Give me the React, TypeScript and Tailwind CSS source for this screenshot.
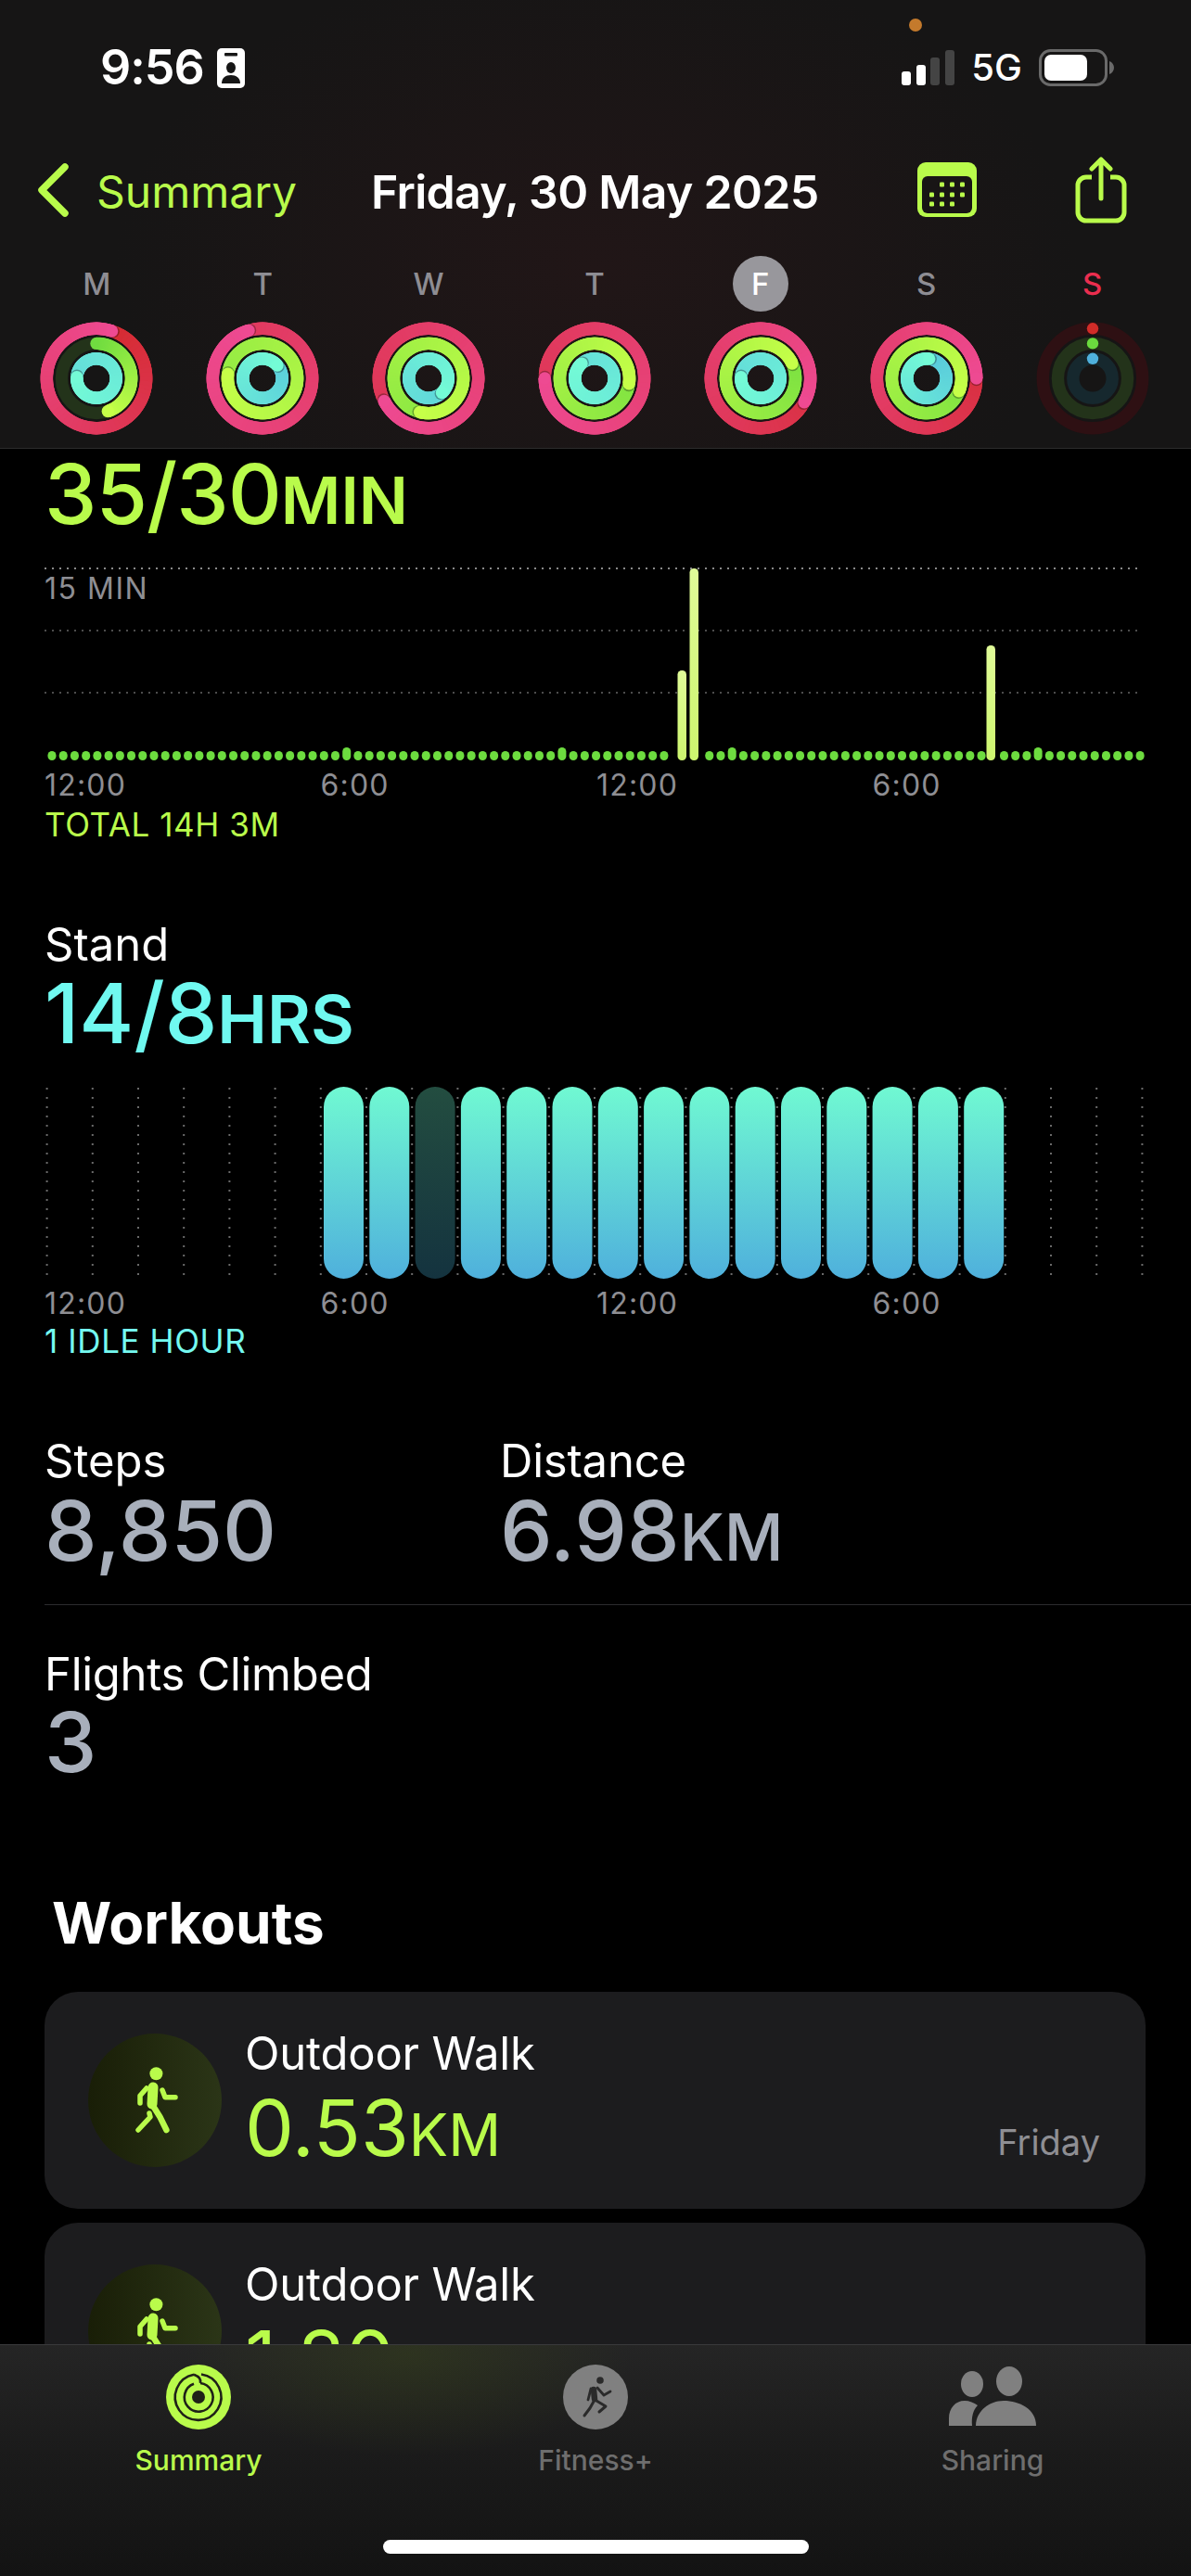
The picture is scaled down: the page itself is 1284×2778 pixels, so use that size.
const LIME = "#b9fb4b";

type RingDay = { label: string; move: number; exercise: number; stand: number };

const days: RingDay[] = [
  { label: "M", move: 1.05, exercise: 0.447, stand: 1.76 },
  { label: "T", move: 1.955, exercise: 1.77, stand: 1.136 },
  { label: "W", move: 1.675, exercise: 1.54, stand: 1.38 },
  { label: "T", move: 1.75, exercise: 1.275, stand: 1.885 },
  { label: "F", move: 1.33, exercise: 1.18, stand: 1.76 },
  { label: "S", move: 1.25, exercise: 1.31, stand: 1.02 },
  { label: "S", move: 0, exercise: 0, stand: 0 },
];

function mix(a: string, b: string, t: number) {
  const ch = (hex: string, i: number) => parseInt(hex.slice(1 + i * 2, 3 + i * 2), 16);
  const parts = [0, 1, 2].map((i) => Math.round(ch(a, i) + (ch(b, i) - ch(a, i)) * t));
  return `rgb(${parts.join(",")})`;
}

function polar(c: number, r: number, laps: number) {
  const a = laps * 2 * Math.PI;
  return { x: c + r * Math.sin(a), y: c - r * Math.cos(a) };
}

function RingArc({ r, total, from, to, track, dot }: { r: number; total: number; from: string; to: string; track: string; dot: string }) {
  const c = 61;
  const sw = 13.4;
  if (total === 0) {
    const top = polar(c, r, 0);
    return (
      <g>
        <circle cx={c} cy={c} r={r} fill="none" stroke={track} strokeWidth={sw} />
        <circle cx={top.x} cy={top.y} r={6.2} fill={dot} />
      </g>
    );
  }
  const start = Math.max(0, total - 1);
  const steps = 72;
  const span = total - start;
  const segments = [];
  for (let i = 0; i < steps; i++) {
    const p0 = start + (span * i) / steps;
    const p1 = start + (span * (i + 3)) / steps;
    const a = polar(c, r, p0);
    const b = polar(c, r, Math.min(p1, total));
    segments.push(
      <path
        key={i}
        d={`M${a.x} ${a.y}A${r} ${r} 0 0 1 ${b.x} ${b.y}`}
        fill="none"
        stroke={mix(from, to, p0 / total)}
        strokeWidth={sw}
      />
    );
  }
  const head = polar(c, r, total);
  const shade = polar(c, r, total + 1.6 / (2 * Math.PI * r));
  const tail = polar(c, r, 0);
  return (
    <g>
      {total < 1 && <circle cx={c} cy={c} r={r} fill="none" stroke={track} strokeWidth={sw} />}
      {total < 1 && <circle cx={tail.x} cy={tail.y} r={sw / 2} fill={from} />}
      {segments}
      {total >= 1 && <circle cx={shade.x} cy={shade.y} r={sw / 2} fill="#000" opacity={0.3} />}
      <circle cx={head.x} cy={head.y} r={sw / 2} fill={to} />
    </g>
  );
}

function Rings({ day }: { day: RingDay }) {
  return (
    <svg width="122" height="122" viewBox="0 0 122 122">
      <RingArc r={53.7} total={day.move} from="#d42a2e" to="#ee4a92" track="#2e1013" dot="#d12c28" />
      <RingArc r={37.6} total={day.exercise} from="#70dc40" to="#c6ff48" track="#23331a" dot="#6ada3e" />
      <RingArc r={21.2} total={day.stand} from="#58c8dc" to="#74fbd6" track="#16282e" dot="#4fb0dc" />
    </svg>
  );
}

function StatusBar() {
  return (
    <div className="relative flex h-[48px] translate-y-[1px] items-center justify-between pl-[108px] pr-[82px]">
      <div className="flex items-center gap-[14px]">
        <span className="text-[52px] leading-[48px] font-semibold text-white tracking-[-1px]">9:56</span>
        <svg width="30" height="43" viewBox="0 0 30 43">
          <rect width="30" height="43" rx="5" fill="#fff" />
          <rect x="8" y="5" width="14" height="3.5" rx="1" fill="#161616" />
          <ellipse cx="15" cy="21" rx="5" ry="6" fill="#161616" />
          <path d="M5 38c0-6 4-9 10-9s10 3 10 9z" fill="#161616" />
        </svg>
      </div>
      <span className="absolute left-[980px] top-[-29px] h-[14px] w-[14px] rounded-full bg-[#c47a2c]" />
      <div className="flex items-center">
        <svg width="58" height="38" viewBox="0 0 58 38">
          <rect x="0" y="23" width="10" height="15" rx="3" fill="#fff" />
          <rect x="16" y="16" width="10" height="22" rx="3" fill="#fff" />
          <rect x="31" y="8" width="10" height="30" rx="3" fill="#444" />
          <rect x="47" y="0" width="10" height="38" rx="3" fill="#444" />
        </svg>
        <span className="ml-[17px] text-[40px] leading-[48px] font-medium text-white">5G</span>
        <svg className="ml-[18px]" width="82" height="40" viewBox="0 0 82 40">
          <rect x="1.5" y="1.5" width="71" height="37" rx="11" fill="none" stroke="#6a6a6a" strokeWidth="3" />
          <rect x="6" y="6" width="46" height="28" rx="7" fill="#fff" />
          <path d="M76 13c3 1 5 4 5 7s-2 6-5 7z" fill="#6a6a6a" />
        </svg>
      </div>
    </div>
  );
}

function NavRow() {
  return (
    <div className="mt-[69px] flex h-[80px] items-center pl-[41px]">
      <svg width="34" height="58" viewBox="0 0 34 58">
        <path d="M29 4L4 29l25 25" fill="none" stroke={LIME} strokeWidth="7.5" strokeLinecap="round" strokeLinejoin="round" />
      </svg>
      <span className="ml-[29px] w-[297px] translate-y-[2px] text-[48px] leading-[80px] text-[#b9fb4b]">Summary</span>
      <span className="ml-[-1px] w-[589px] translate-y-[2px] text-[50px] leading-[80px] font-semibold text-white tracking-[-0.7px]">Friday, 30 May 2025</span>
      <svg width="64" height="60" viewBox="0 0 64 60">
        <rect width="64" height="59" rx="9" fill={LIME} />
        <rect x="5" y="15" width="54" height="40" rx="6" fill="#181515" />
        {[
          [16, 24], [27, 24], [38, 24],
          [5, 35], [16, 35], [27, 35], [38, 35],
          [5, 45], [16, 45], [27, 45],
        ].map(([x, y], i) => (
          <rect key={i} x={x + 8} y={y - 2.5} width="5" height="5" rx="1.2" fill={LIME} />
        ))}
      </svg>
      <svg className="ml-[106px]" width="56" height="72" viewBox="0 0 56 72">
        <path d="M18 22H12a9 9 0 0 0-9 9v29a9 9 0 0 0 9 9h32a9 9 0 0 0 9-9V31a9 9 0 0 0-9-9h-6" fill="none" stroke={LIME} strokeWidth="5" />
        <path d="M28 3v42M18 13L28 3l10 10" fill="none" stroke={LIME} strokeWidth="5" strokeLinecap="round" strokeLinejoin="round" />
      </svg>
    </div>
  );
}

function WeekRow() {
  return (
    <div className="mt-[31px] grid w-[1252px] ml-[15px] grid-cols-7">
      {days.map((d, i) => (
        <div key={i} className="flex flex-col items-center">
          <div
            className={
              i === 4
                ? "flex h-[60px] w-[60px] items-center justify-center rounded-full bg-[#98979c] text-[33px] leading-[60px] font-medium text-white"
                : i === 6
                  ? "flex h-[60px] w-[60px] items-center justify-center text-[33px] leading-[60px] font-medium text-[#ea2e4f]"
                  : "flex h-[60px] w-[60px] items-center justify-center text-[33px] leading-[60px] font-medium text-[#8e8d93]"
            }
          >
            {d.label}
          </div>
          <div className="mt-[11px] flex">
            <Rings day={d} />
          </div>
        </div>
      ))}
    </div>
  );
}

function ExerciseChart() {
  // 15 minute buckets, the tall ones sit a little off the dot grid
  const dots = Array.from({ length: 97 }, (_, i) => 8 + i * 12.22);
  const tall = [
    { x: 687, top: 115 },
    { x: 700, top: 5 },
    { x: 1020, top: 88 },
  ];
  const bumps = [26, 45, 60, 87];
  return (
    <div className="relative mt-[26px] h-[216px] w-[1190px]">
      <svg width="1190" height="216" viewBox="0 0 1190 216">
        <defs>
          <linearGradient id="tallBar" x1="0" y1="0" x2="0" y2="1">
            <stop offset="0" stopColor="#e0fb98" />
            <stop offset="1" stopColor="#cdf56e" />
          </linearGradient>
        </defs>
        <line x1="0" x2="1184" y1="5" y2="5" stroke="#8a8a8a" strokeWidth="2" strokeDasharray="2 6" />
        <line x1="0" x2="1184" y1="72" y2="72" stroke="#4d4d4d" strokeWidth="2" strokeDasharray="2 6" />
        <line x1="0" x2="1184" y1="139" y2="139" stroke="#4d4d4d" strokeWidth="2" strokeDasharray="2 6" />
        {dots.map((x, i) => {
          if (tall.some((t) => Math.abs(t.x - x) < 8)) return null;
          const h = bumps.includes(i) ? 14 : 10;
          return <rect key={i} x={x - 4.5} y={212 - h} width="9" height={h} rx="4.5" fill="#6ddc3f" />;
        })}
        {tall.map((t) => (
          <rect key={t.x} x={t.x - 4.5} y={t.top} width="9.5" height={212 - t.top} rx="4.5" fill="url(#tallBar)" />
        ))}
      </svg>
      <span className="absolute left-0 top-[7px] text-[32px] leading-[40px] tracking-[1.5px] text-[#8e8e93]">15 MIN</span>
    </div>
  );
}

function StandChart() {
  const lines = Array.from({ length: 25 }, (_, i) => 2.6 + i * 49.2);
  const hours = Array.from({ length: 15 }, (_, i) => 301 + i * 49.3);
  return (
    <svg className="mt-[35px]" width="1190" height="207" viewBox="0 0 1190 207">
      <defs>
        <linearGradient id="standOn" x1="0" y1="0" x2="0" y2="1">
          <stop offset="0" stopColor="#70f9d2" />
          <stop offset="1" stopColor="#4fb0dc" />
        </linearGradient>
        <linearGradient id="standOff" x1="0" y1="0" x2="0" y2="1">
          <stop offset="0" stopColor="#234d40" />
          <stop offset="1" stopColor="#14333f" />
        </linearGradient>
      </defs>
      {lines.map((x, i) => (
        <line key={i} x1={x} x2={x} y1="1" y2="204" stroke="#6a6a6a" strokeWidth="2" strokeDasharray="2 8" />
      ))}
      {hours.map((x, i) => (
        <rect key={i} x={x} y="0" width="43" height="207" rx="21.5" fill={i === 2 ? "url(#standOff)" : "url(#standOn)"} />
      ))}
    </svg>
  );
}

function AxisLabels({ className }: { className: string }) {
  return (
    <div className={`grid w-[1190px] grid-cols-4 text-[32px] leading-[40px] tracking-[1.2px] text-[#8e8e93] ${className}`}>
      <span>12:00</span>
      <span>6:00</span>
      <span>12:00</span>
      <span>6:00</span>
    </div>
  );
}

function WalkIcon() {
  return (
    <svg width="144" height="144" viewBox="0 0 144 144" className="rounded-full bg-[linear-gradient(90deg,#191e07,#2b3517)]">
      <g fill="none" stroke={LIME} strokeLinecap="round" strokeLinejoin="round">
        <circle cx="73.4" cy="43.3" r="7" fill={LIME} stroke="none" />
        <path d="M70 58L69 76" strokeWidth="11" />
        <path d="M63 59L56 67V75" strokeWidth="5.5" />
        <path d="M80 61L83 68.7H94" strokeWidth="5.5" />
        <path d="M70 78L77.5 90L84.4 104" strokeWidth="6.5" />
        <path d="M66 86L67 90L54 104" strokeWidth="5.5" />
      </g>
    </svg>
  );
}

function WorkoutCard({ value, className }: { value: string; className?: string }) {
  return (
    <div className={`flex h-[234px] w-[1187px] items-center rounded-[36px] bg-[#1c1c1e] pl-[47px] pr-[49px] ${className ?? ""}`}>
      <WalkIcon />
      <div className="ml-[25px] self-start pt-[39px]">
        <div className="text-[49px] leading-[56px] tracking-[-0.2px] text-white">Outdoor Walk</div>
        <div className="text-[84px] leading-[104px] font-normal text-[#b9fb4b]">
          {value}
          <span className="text-[63px] leading-none">KM</span>
        </div>
      </div>
      <span className="mb-[48px] ml-auto self-end text-[38px] leading-[48px] text-[#8e8e93]">Friday</span>
    </div>
  );
}

function TabBar() {
  return (
    <div className="h-[250px] shrink-0 border-t border-[#3a3a3c] bg-[radial-gradient(ellipse_240px_110px_at_440px_10px,rgba(70,90,20,0.28),transparent),linear-gradient(180deg,#252525_0%,#1b1b1b_45%,#131313_100%)] pt-[21px]">
      <div className="grid grid-cols-3">
        <div className="flex flex-col items-center">
          <svg width="70" height="70" viewBox="0 0 70 70">
            <circle cx="35" cy="35" r="35" fill={LIME} />
            <path d="M38 10.5A24.8 24.8 0 1 1 30 10.7" fill="none" stroke="#1f2118" strokeWidth="2.6" />
            <path d="M37 20A15.4 15.4 0 1 1 30 20.8" fill="none" stroke="#1f2118" strokeWidth="2.6" />
            <path d="M30 10.7C36 13 38 16 37 20" fill="none" stroke="#1f2118" strokeWidth="2.6" />
            <circle cx="35" cy="35" r="7" fill="#1f2118" />
          </svg>
          <span className="mt-[15px] text-[30px] leading-[36px] font-medium text-[#b9fb4b]">Summary</span>
        </div>
        <div className="flex flex-col items-center">
          <svg width="70" height="70" viewBox="0 0 70 70">
            <circle cx="35" cy="35" r="35" fill="#808080" />
            <g fill="none" stroke="#2a2a2a" strokeLinecap="round" strokeLinejoin="round">
              <circle cx="40" cy="17" r="3.8" fill="#2a2a2a" stroke="none" />
              <path d="M33 27L34 37" strokeWidth="6.5" />
              <path d="M30 26L27 38" strokeWidth="2.8" />
              <path d="M37 25L44 33L51 29" strokeWidth="2.8" />
              <path d="M34 38L29 47L23 55" strokeWidth="3" />
              <path d="M36 39L46 45L39 51" strokeWidth="3" />
            </g>
          </svg>
          <span className="mt-[15px] text-[30px] leading-[36px] font-medium text-[#6e6e6e]">Fitness+</span>
        </div>
        <div className="flex flex-col items-center">
          <svg width="96" height="70" viewBox="0 0 96 70">
            <ellipse cx="26" cy="21" rx="12" ry="14" fill="#808080" />
            <ellipse cx="66" cy="18" rx="14" ry="16" fill="#808080" />
            <path d="M1 66V58C1 47 8 39 18 39C23 39 28 41 32 44C27 49 25 57 26 66z" fill="#808080" />
            <path d="M30 66C30 50 45 39 60 39C77 39 95 48 95 66z" fill="#808080" />
          </svg>
          <span className="mt-[15px] text-[30px] leading-[36px] font-medium text-[#6e6e6e]">Sharing</span>
        </div>
      </div>
      <div className="mx-auto mt-[68px] h-[15px] w-[459px] rounded-full bg-white" />
    </div>
  );
}

export default function App() {
  return (
    <div className="flex h-[2778px] w-[1284px] flex-col overflow-hidden bg-black font-['Inter',sans-serif]">
      <header className="h-[484px] shrink-0 border-b border-[#2c2c2c] bg-[radial-gradient(ellipse_520px_340px_at_50%_60%,#211617_0%,#161515_100%)] pt-[48px]">
        <StatusBar />
        <NavRow />
        <WeekRow />
      </header>

      <main className="min-h-0 flex-1 overflow-hidden pl-[48px]">
        <div className="text-[90px] leading-[98px] font-medium tracking-[-1px] text-[#b9fb4b]">
          35/30<span className="text-[70px] leading-none font-semibold tracking-normal">MIN</span>
        </div>
        <ExerciseChart />
        <AxisLabels className="mt-[3px]" />
        <div className="mt-[2px] text-[35px] leading-[40px] tracking-[0.6px] text-[#b9fb4b]">TOTAL 14H 3M</div>

        <div className="mt-[80px] text-[49px] leading-[60px] text-white">Stand</div>
        <div className="text-[90px] leading-[88px] font-medium text-[#70f9f0]">
          14/8<span className="text-[72px] leading-none font-semibold">HRS</span>
        </div>
        <StandChart />
        <AxisLabels className="mt-[7px]" />
        <div className="text-[35px] leading-[40px] tracking-[0.6px] text-[#74f9f0]">1 IDLE HOUR</div>

        <div className="mt-[80px] flex">
          <div className="w-[491px]">
            <div className="text-[49px] leading-[60px] text-white">Steps</div>
            <div className="text-[90px] leading-[90px] font-medium text-[#a8afbb]">8,850</div>
          </div>
          <div>
            <div className="text-[49px] leading-[60px] tracking-[-0.2px] text-white">Distance</div>
            <div className="text-[90px] leading-[90px] font-medium text-[#a8afbb]">
              6.98<span className="text-[70px] leading-none">KM</span>
            </div>
          </div>
        </div>
        <div className="mt-[34px] border-t border-[#2c2c2e]" />
        <div className="mt-[45px] text-[49px] leading-[60px] tracking-[-0.3px] text-white">Flights Climbed</div>
        <div className="text-[90px] leading-[86px] font-medium text-[#a8afbb]">3</div>

        <h2 className="ml-[8px] mt-[117px] text-[62px] leading-[70px] font-bold text-white">Workouts</h2>
        <WorkoutCard className="mt-[39px]" value="0.53" />
        <WorkoutCard className="mt-[15px]" value="1.80" />
      </main>

      <TabBar />
    </div>
  );
}
